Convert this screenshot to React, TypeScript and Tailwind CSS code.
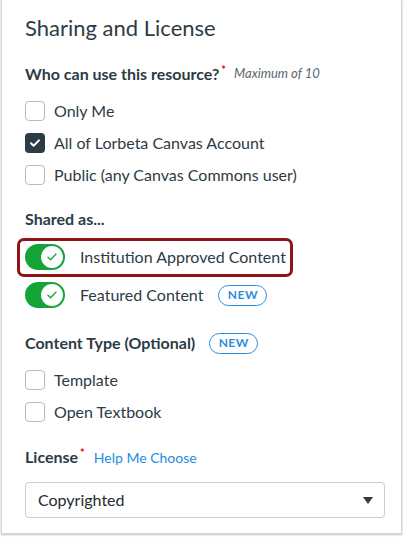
import React from 'react';

const textColor = 'text-[#2d3b45]';

const Checkbox: React.FC<{ label: string; checked?: boolean }> = ({ label, checked }) => (
  <div className="flex h-[32px] items-center gap-[9px]">
    {checked ? (
      <span className="flex h-[20px] w-[20px] items-center justify-center rounded-[4px] bg-[#2d3b45]">
        <svg width="12" height="12" viewBox="0 0 12 12" fill="none">
          <path d="M2 6.2l2.6 2.6L10 3.4" stroke="#fff" strokeWidth="2" strokeLinecap="round" strokeLinejoin="round" />
        </svg>
      </span>
    ) : (
      <span className="h-[20px] w-[20px] rounded-[4px] border border-[#b4bcc2] bg-white" />
    )}
    <span className={`text-[16px] ${textColor}`}>{label}</span>
  </div>
);

const Toggle: React.FC = () => (
  <span className="flex h-[26px] w-[40px] items-center justify-end rounded-full bg-[#13a538] pr-[2px]">
    <span className="flex h-[22px] w-[22px] items-center justify-center rounded-full bg-white">
      <svg width="12" height="12" viewBox="0 0 12 12" fill="none">
        <path d="M2 6.2l2.6 2.6L10 3" stroke="#13a538" strokeWidth="1.3" strokeLinecap="round" strokeLinejoin="round" />
      </svg>
    </span>
  </span>
);

const NewBadge: React.FC = () => (
  <span className="flex h-[21px] w-[49px] items-center justify-center rounded-full border border-[#2b8fe0] text-[12px] font-bold tracking-[0.5px] text-[#2b8fe0]">
    NEW
  </span>
);

const Heading: React.FC<{ children: React.ReactNode; className?: string }> = ({ children, className }) => (
  <div className={`flex h-[24px] items-center text-[16px] font-bold ${textColor} ${className ?? ''}`}>{children}</div>
);

export default function App() {
  return (
    <div className="h-[538px] w-[404px] bg-white" style={{ fontFamily: 'Lato, "Noto Sans", sans-serif' }}>
      <div className="ml-[1px] w-[401px] border-x border-b border-[#d0d5d9] bg-white pb-[15px] pl-[23px] pr-[16px] pt-[12px] shadow-[0_1px_2px_rgba(0,0,0,0.25)]">
        <div className={`flex h-[30px] items-center text-[22px] ${textColor}`}>Sharing and License</div>

        <Heading className="mt-[20px]">
          Who can use this resource?
          <span className="mb-[8px] ml-[2px] text-[11px] text-[#e0061f]">*</span>
          <span className="ml-[8px] text-[13px] font-normal italic text-[#5b6770]">Maximum of 10</span>
        </Heading>

        <div className="mt-[9px]">
          <Checkbox label="Only Me" />
          <Checkbox label="All of Lorbeta Canvas Account" checked />
          <Checkbox label="Public (any Canvas Commons user)" />
        </div>

        <Heading className="mt-[16px]">Shared as...</Heading>

        <div className="relative mt-[7px]">
          <div className="absolute left-[-8px] top-0 h-[39px] w-[276px] rounded-[7px] border-[3px] border-[#8e1518]" />
          <div className="flex h-[38px] items-center gap-[15px]">
            <Toggle />
            <span className={`text-[16px] ${textColor}`}>Institution Approved Content</span>
          </div>
          <div className="flex h-[38px] items-center gap-[15px]">
            <Toggle />
            <span className={`text-[16px] ${textColor}`}>Featured Content</span>
            <NewBadge />
          </div>
        </div>

        <Heading className="mt-[17px] gap-[14px]">
          Content Type (Optional)
          <NewBadge />
        </Heading>

        <div className="mt-[9px]">
          <Checkbox label="Template" />
          <Checkbox label="Open Textbook" />
        </div>

        <Heading className="mt-[17px]">
          License
          <span className="mb-[8px] ml-[2px] text-[11px] text-[#e0061f]">*</span>
          <span className="ml-[9px] text-[14px] font-normal text-[#1e8ee0]">Help Me Choose</span>
        </Heading>

        <div className="mt-[13px] flex h-[36px] w-[360px] items-center justify-between rounded-[4px] border border-[#c7cdd1] pl-[12px] pr-[11px]">
          <span className="text-[16px] text-[#222b32]">Copyrighted</span>
          <svg width="10" height="7" viewBox="0 0 10 7">
            <path d="M0 0h10L5 7z" fill="#2d3b45" />
          </svg>
        </div>
      </div>
    </div>
  );
}
